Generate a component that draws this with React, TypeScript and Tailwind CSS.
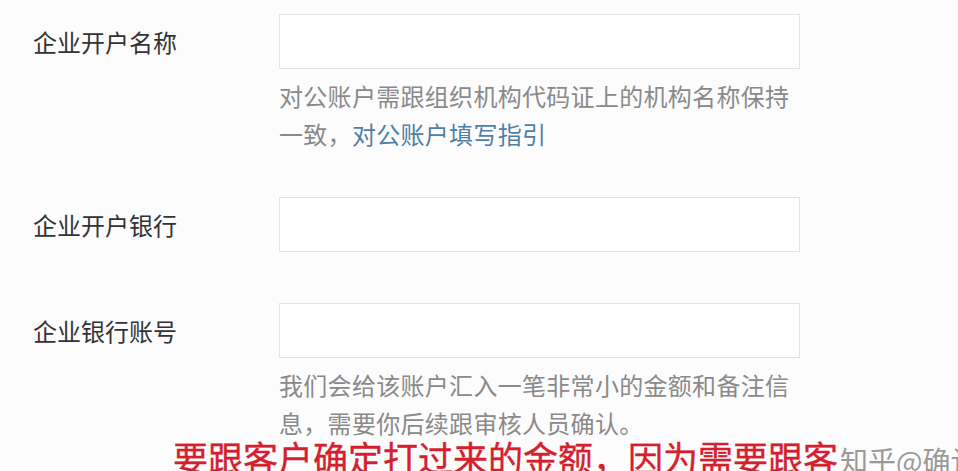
import React from "react";

const Row = ({ label, helper, mt }: { label: string; helper?: React.ReactNode; mt: string }) => (
  <div className={mt}>
    <div className="flex items-center">
      <div className="w-[246px] shrink-0 text-[24px] leading-[30px] text-[#333333]">{label}</div>
      <div className="w-[521px] h-[55px] border border-[#e4e4e6] bg-white" />
    </div>
    {helper && (
      <div className="ml-[246px] w-[521px] mt-[8px] text-[24px] leading-[38px] tracking-[0.3px] text-[#8a8a8a]">
        {helper}
      </div>
    )}
  </div>
);

export default function App() {
  return (
    <div className="w-[958px] h-[471px] overflow-hidden bg-[#fcfcfd] font-['Noto_Sans_CJK_SC',sans-serif]">
      <div className="pl-[33px] pt-[14px]">
        <Row
          mt="mt-0"
          label="企业开户名称"
          helper={
            <>
              对公账户需跟组织机构代码证上的机构名称保持一致，
              <span className="text-[#4f7fa6]">对公账户填写指引</span>
            </>
          }
        />
        <Row mt="mt-[44px]" label="企业开户银行" />
        <Row
          mt="mt-[51px]"
          label="企业银行账号"
          helper="我们会给该账户汇入一笔非常小的金额和备注信息，需要你后续跟审核人员确认。"
        />
        <div className="ml-[140px] -mt-[3px] flex items-baseline whitespace-nowrap">
          <span className="text-[35px] leading-[35px] font-normal text-[#d61f2e] [-webkit-text-stroke:0.4px_#d61f2e]">
            要跟客户确定打过来的金额，因为需要跟客
          </span>
          <span className="ml-[2px] text-[28px] leading-[35px] text-[#9a9a9a]">知乎@确认</span>
        </div>
      </div>
    </div>
  );
}
